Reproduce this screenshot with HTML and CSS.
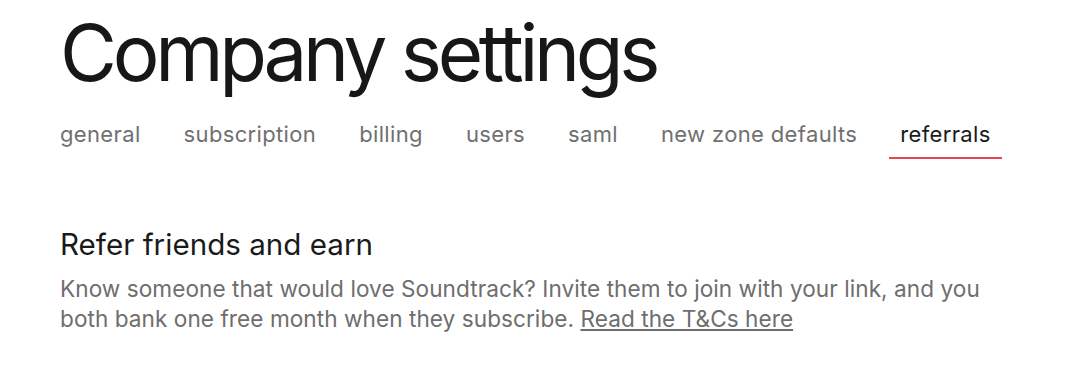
FILE: index.html
```html
<!DOCTYPE html>
<html lang="en">
<head>
<meta charset="utf-8">
<title>Company settings</title>
<link rel="stylesheet" href="styles.css">
</head>
<body>
<main class="page">
  <h1 class="title">Company settings</h1>
  <nav class="tabs">
    <a class="tab" href="#">general</a>
    <a class="tab" href="#">subscription</a>
    <a class="tab" href="#">billing</a>
    <a class="tab" href="#">users</a>
    <a class="tab" href="#">saml</a>
    <a class="tab" href="#">new zone defaults</a>
    <a class="tab tab-active" href="#">referrals</a>
  </nav>
  <section class="referral">
    <h2 class="referral-title">Refer friends and earn</h2>
    <p class="referral-text">Know someone that would love Soundtrack? Invite them to join with your link, and you both bank one free month when they subscribe. <a class="referral-link" href="#">Read the T&amp;Cs here</a></p>
  </section>
</main>
</body>
</html>
```
FILE: styles.css
```css
* { box-sizing: border-box; }
html, body { margin: 0; background: #ffffff; }
body {
  font-family: Inter, "Liberation Sans", sans-serif;
  color: #1a1a1a;
}
.page {
  padding: 5px 0 0 60px;
}
.title {
  margin: 0;
  font-size: 78px;
  font-weight: 400;
  line-height: 96px;
  letter-spacing: -0.055em;
  color: #171717;
}
.tabs {
  display: flex;
  gap: 21px;
  margin: 18px 0 0 -11px;
}
.tab {
  padding: 0 11px 8px;
  font-size: 22px;
  line-height: 30px;
  letter-spacing: 0.35px;
  color: #707070;
  text-decoration: none;
  border-bottom: 2px solid transparent;
}
.tab-active {
  color: #1a1a1a;
  border-bottom-color: #e3474c;
}
.referral {
  margin-top: 67px;
}
.referral-title {
  margin: 0;
  font-size: 29.6px;
  font-weight: 400;
  line-height: 36px;
  color: #1a1a1a;
}
.referral-text {
  margin: 12px 0 0;
  max-width: 960px;
  font-size: 22.6px;
  line-height: 30px;
  letter-spacing: 0.05px;
  color: #6e6e6e;
}
.referral-link {
  color: #6e6e6e;
  text-decoration: underline;
}
```
